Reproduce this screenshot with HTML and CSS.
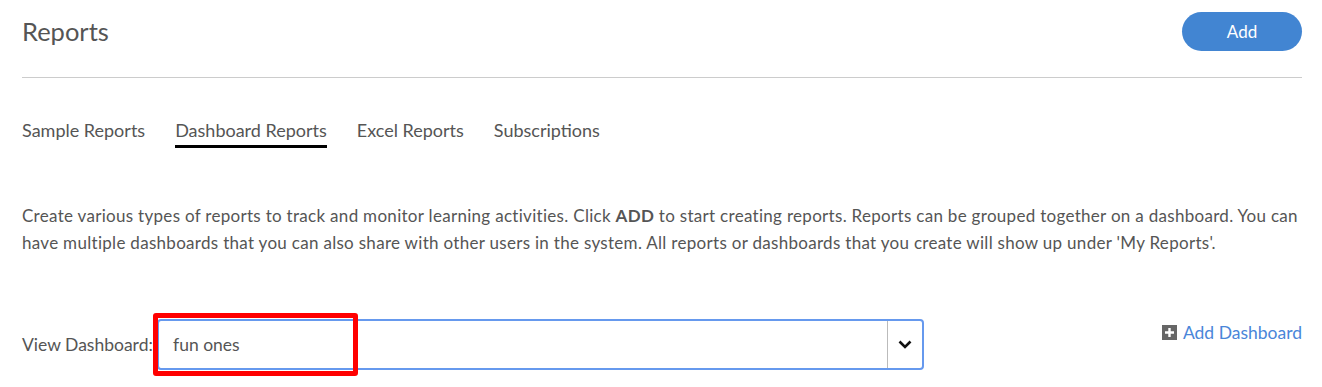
FILE: index.html
```html
<!DOCTYPE html>
<html lang="en">
<head>
    <meta charset="UTF-8">
    <title>Reports</title>
    <link rel="stylesheet" href="styles.css">
</head>
<body>
    <div class="page">
        <!-- Header -->
        <div class="page-header">
            <h1>Reports</h1>
            <button class="add-btn">Add</button>
        </div>

        <!-- Tabs -->
        <ul class="tabs">
            <li>Sample Reports</li>
            <li class="active">Dashboard Reports</li>
            <li>Excel Reports</li>
            <li>Subscriptions</li>
        </ul>

        <p class="intro">Create various types of reports to track and monitor learning activities. Click <b>ADD</b> to start creating reports. Reports can be grouped together on a dashboard. You can have multiple dashboards that you can also share with other users in the system. All reports or dashboards that you create will show up under 'My Reports'.</p>

        <!-- Dashboard picker -->
        <div class="dashboard-row">
            <label>View Dashboard:</label>
            <div class="select">
                <span class="select-value">fun ones</span>
                <span class="select-arrow">
                    <svg width="14" height="9" viewBox="0 0 14 9"><path d="M1.5 1.5 L7 7 L12.5 1.5" fill="none" stroke="#111" stroke-width="2.6"/></svg>
                </span>
                <span class="highlight"></span>
            </div>
            <a href="#" class="add-dashboard">
                <svg width="15" height="15" viewBox="0 0 15 15"><rect width="15" height="15" fill="#666"/><path d="M7.5 3v9M3 7.5h9" stroke="#fff" stroke-width="2.4"/></svg>
                Add Dashboard
            </a>
        </div>
    </div>
</body>
</html>
```

FILE: styles.css
```css
* {
    margin: 0;
    padding: 0;
    box-sizing: border-box;
}

body {
    font-family: Lato, "Noto Sans", Arial, sans-serif;
    color: #555;
    background: #fff;
    min-height: 100vh;
}

.page {
    padding: 12px 20px 20px 22px;
}

.page-header {
    display: flex;
    justify-content: space-between;
    align-items: center;
    height: 39px;
    padding-bottom: 26px;
    box-sizing: content-box;
    border-bottom: 1px solid #ccc;
}

.page-header h1 {
    font-size: 25.5px;
    font-weight: 400;
    color: #555;
    margin-top: -2px;
}

.add-btn {
    width: 120px;
    height: 39px;
    border: none;
    border-radius: 20px;
    background: #4285d2;
    color: #fff;
    font-family: inherit;
    font-size: 17px;
}

.tabs {
    list-style: none;
    display: flex;
    gap: 30px;
    margin-top: 41px;
    font-size: 18px;
}

.tabs li {
    padding-bottom: 4px;
    border-bottom: 3px solid transparent;
}

.tabs li.active {
    border-bottom-color: #000;
}

.intro {
    margin-top: 54px;
    font-size: 17px;
    line-height: 27px;
    letter-spacing: 0.3px;
}

.dashboard-row {
    display: flex;
    align-items: center;
    margin-top: 63px;
}

.dashboard-row label {
    font-size: 17.5px;
    width: 135px;
}

.select {
    position: relative;
    display: flex;
    width: 767px;
    height: 51px;
    border: 2px solid #6699ee;
    border-radius: 4px;
}

.select-value {
    flex: 1;
    padding-left: 14px;
    line-height: 47px;
    font-size: 17.5px;
}

.select-arrow {
    width: 35px;
    border-left: 1px solid #bbb;
    display: flex;
    align-items: center;
    justify-content: center;
}

.highlight {
    position: absolute;
    left: -6px;
    top: -8px;
    width: 205px;
    height: 63px;
    border: 5px solid #f00;
    border-radius: 3px;
}

.add-dashboard {
    margin-left: auto;
    margin-top: -24px;
    display: flex;
    align-items: center;
    gap: 6px;
    color: #4a86d9;
    text-decoration: none;
    font-size: 17.5px;
}
```
